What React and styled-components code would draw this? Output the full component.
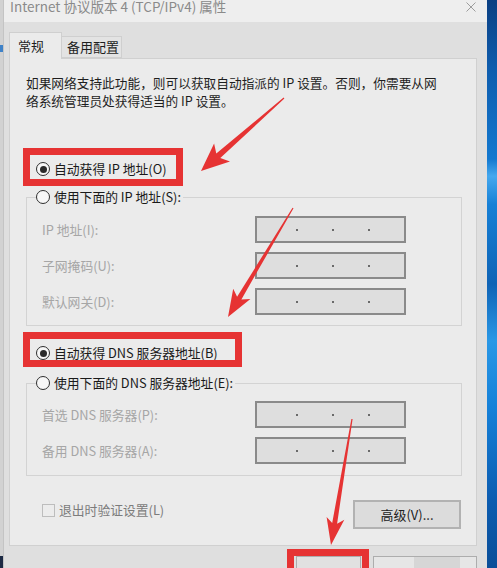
import React from "react";
import styled, { createGlobalStyle } from "styled-components";

const GlobalStyle = createGlobalStyle`
  html, body { margin: 0; padding: 0; }
  body {
    width: 497px; height: 568px; overflow: hidden;
    font-family: "Noto Sans CJK SC", "Noto Sans", sans-serif;
    background: #e0e0e0;
  }
`;

const RED = "#e63333";

const Screen = styled.div`
  position: relative;
  display: flex;
  width: 497px;
  height: 568px;
  overflow: hidden;
`;

const LeftEdge = styled.div`
  width: 4px;
  flex: none;
  display: flex;
  flex-direction: column;
  background: #d2d2d2;
  border-right: 1px solid #c4c4c4;
  box-sizing: border-box;
`;

const EdgeMark = styled.div`
  margin-top: ${(p) => p.$top}px;
  height: ${(p) => p.$h}px;
  background: ${(p) => p.$c};
`;

const Window = styled.div`
  width: 483px;
  flex: none;
  display: flex;
  flex-direction: column;
  background: #dfdfdf;
`;

const TitleBar = styled.div`
  height: 22px;
  flex: none;
  display: flex;
  justify-content: space-between;
  align-items: flex-start;
  padding: 0 11px 0 6px;
  background: #eeeeee;
`;

const TitleText = styled.div`
  font-size: 13.5px;
  line-height: 16px;
  margin-top: -2px;
  color: #8a8a8a;
  white-space: nowrap;
`;

const CloseIcon = styled.svg`
  margin-top: 2px;
  width: 10px;
  height: 10px;
`;

const Body = styled.div`
  display: flex;
  flex-direction: column;
  padding: 10px 10px 0 5px;
`;

const TabRow = styled.div`
  display: flex;
  align-items: flex-end;
  height: 26px;
  position: relative;
  z-index: 1;
`;

const Tab = styled.div`
  box-sizing: border-box;
  display: flex;
  align-items: center;
  width: ${(p) => p.$w}px;
  height: ${(p) => (p.$active ? 27 : 22)}px;
  padding-left: ${(p) => p.$pad}px;
  margin-bottom: ${(p) => (p.$active ? -1 : 0)}px;
  padding-bottom: ${(p) => (p.$active ? 1 : 0)}px;
  font-size: 13px;
  line-height: 18px;
  color: #1e1e1e;
  background: ${(p) => (p.$active ? "#ebebeb" : "#e3e3e3")};
  border: 1px solid #cfcfcf;
  border-bottom: ${(p) => (p.$active ? "none" : "1px solid #cfcfcf")};
  border-left: ${(p) => (p.$first ? "1px solid #cfcfcf" : "none")};
  white-space: nowrap;
`;

const Panel = styled.div`
  box-sizing: border-box;
  width: 468px;
  display: flex;
  flex-direction: column;
  padding: 15px 15px 16px 16px;
  background: #ebebeb;
  border: 1px solid #d0d0d0;
`;

const Intro = styled.p`
  margin: 0;
  font-size: 12.7px;
  line-height: 18px;
  color: #1e1e1e;
  white-space: nowrap;
`;

const OptionRow = styled.label`
  position: relative;
  display: flex;
  align-items: center;
  gap: 4px;
  height: 18px;
  margin-top: ${(p) => p.$mt || 0}px;
  margin-left: ${(p) => p.$ml || 0}px;
  font-size: 12.8px;
  line-height: 18px;
  color: #1a1a1a;
  white-space: nowrap;
  align-self: flex-start;
`;

const Highlight = styled.span`
  position: absolute;
  top: ${(p) => p.$t}px;
  left: ${(p) => p.$l}px;
  right: ${(p) => p.$r}px;
  bottom: ${(p) => p.$b}px;
  border: 7px solid ${RED};
  pointer-events: none;
`;

const Radio = styled.span`
  box-sizing: border-box;
  width: 14px;
  height: 14px;
  flex: none;
  border-radius: 50%;
  border: 1px solid #2e2e2e;
  background: #f7f7f7;
  display: flex;
  align-items: center;
  justify-content: center;
  &::after {
    content: "";
    width: 7px;
    height: 7px;
    border-radius: 50%;
    background: ${(p) => (p.$checked ? "#2a2a2a" : "transparent")};
  }
`;

const Group = styled.fieldset`
  margin: ${(p) => p.$mt}px -1px 0 0;
  padding: ${(p) => p.$pt}px 0 ${(p) => p.$pb}px 10px;
  border: 1px solid #d3d3d3;
  min-width: 0;
  display: flex;
  flex-direction: column;
  gap: 9px;
`;

const GroupLegend = styled.legend`
  padding: 0;
  margin: 0;
  margin-left: -1px;
  padding-right: 2px;
`;

const FieldRow = styled.div`
  display: grid;
  grid-template-columns: 213px 151px;
  align-items: center;
  height: 27px;
  padding-left: 5px;
`;

const FieldLabel = styled.span`
  font-size: 12.8px;
  line-height: 18px;
  color: #a6a6a6;
  white-space: nowrap;
`;

const IpBox = styled.div`
  box-sizing: border-box;
  width: 151px;
  height: 27px;
  display: flex;
  align-items: center;
  gap: 34px;
  padding-left: 39px;
  padding-top: 1px;
  background: #dedede;
  border: 2px solid #8a8a8a;
`;

const IpDot = styled.span`
  width: 2px;
  height: 2px;
  background: #6a6a6a;
`;

const Footer = styled.div`
  display: flex;
  justify-content: space-between;
  align-items: flex-start;
  margin-top: 24px;
`;

const CheckRow = styled.div`
  display: flex;
  align-items: center;
  gap: 4px;
  height: 18px;
  margin-top: 1px;
  margin-left: 16px;
  font-size: 12.8px;
  line-height: 18px;
  color: #7c7c7c;
  white-space: nowrap;
`;

const CheckBox = styled.span`
  box-sizing: border-box;
  width: 13px;
  height: 13px;
  border: 1px solid #bdbdbd;
  background: #ececec;
`;

const Button = styled.div`
  box-sizing: border-box;
  width: ${(p) => p.$w}px;
  height: 29px;
  display: flex;
  align-items: center;
  justify-content: center;
  font-size: 13px;
  color: #222;
  background: #dcdcdc;
  border: 2px solid #b2b2b2;
  white-space: nowrap;
`;

const BottomBar = styled.div`
  display: flex;
  margin-top: 10px;
  margin-left: 287px;
  gap: 12px;
`;

const DialogButton = styled.div`
  position: relative;
  box-sizing: border-box;
  width: ${(p) => p.$w}px;
  height: 24px;
  background: ${(p) => p.$bg};
  border: 1px solid #adadad;
  display: flex;
`;

const Mosaic = styled.span`
  width: ${(p) => p.$w}px;
  margin-left: ${(p) => p.$ml}px;
  background: #d6d6d6;
`;

const Desktop = styled.div`
  flex: 1;
  background: linear-gradient(
    180deg,
    #0b3f82 0%,
    #0e5cad 12%,
    #1378cf 28%,
    #45a8ee 31%,
    #1680d6 36%,
    #0f63b5 50%,
    #2a98e6 60%,
    #1580d8 72%,
    #0c5cb0 88%,
    #0a4e98 100%
  );
`;

const Overlay = styled.svg`
  position: absolute;
  left: 0;
  top: 0;
  width: 497px;
  height: 568px;
  pointer-events: none;
`;

function arrowPoints(x1, y1, x2, y2, headLen, headW, shaftW) {
  const dx = x2 - x1;
  const dy = y2 - y1;
  const L = Math.hypot(dx, dy);
  const ux = dx / L;
  const uy = dy / L;
  const px = -uy;
  const py = ux;
  const bx = x2 - ux * headLen;
  const by = y2 - uy * headLen;
  const jx = bx + ux * 5;
  const jy = by + uy * 5;
  const pts = [
    [x1 + px * 0.6, y1 + py * 0.6],
    [jx + (px * shaftW) / 2, jy + (py * shaftW) / 2],
    [bx + (px * headW) / 2, by + (py * headW) / 2],
    [x2, y2],
    [bx - (px * headW) / 2, by - (py * headW) / 2],
    [jx - (px * shaftW) / 2, jy - (py * shaftW) / 2],
    [x1 - px * 0.6, y1 - py * 0.6],
  ];
  return pts.map((p) => p.map((v) => v.toFixed(1)).join(",")).join(" ");
}

const arrows = [
  [284, 98, 201, 171, 28, 24, 6],
  [293, 208, 228, 317, 27, 20, 5],
  [352, 419, 331, 545, 27, 18, 5],
];

function IpField() {
  return (
    <IpBox>
      <IpDot />
      <IpDot />
      <IpDot />
    </IpBox>
  );
}

export default function App() {
  return (
    <>
      <GlobalStyle />
      <Screen>
        <LeftEdge>
          <EdgeMark $top={45} $h={7} $c="#3f82c8" />
          <EdgeMark $top={504} $h={12} $c="#1d2a44" />
        </LeftEdge>
        <Window>
          <TitleBar>
            <TitleText>Internet 协议版本 4 (TCP/IPv4) 属性</TitleText>
            <CloseIcon viewBox="0 0 10 10">
              <path d="M0.5 0.5 L9.5 9.5 M9.5 0.5 L0.5 9.5" stroke="#9c9c9c" strokeWidth="1" fill="none" />
            </CloseIcon>
          </TitleBar>
          <Body>
            <TabRow>
              <Tab $active $first $w={53} $pad={8}>常规</Tab>
              <Tab $w={60} $pad={5}>备用配置</Tab>
            </TabRow>
            <Panel>
              <Intro>
                如果网络支持此功能，则可以获取自动指派的 IP 设置。否则，你需要从网
                <br />
                络系统管理员处获得适当的 IP 设置。
              </Intro>

              <OptionRow $mt={50} $ml={10}>
                <Radio $checked />
                自动获得 IP 地址(O)
                <Highlight $t={-12} $l={-13} $r={-16} $b={-8} />
              </OptionRow>

              <Group $mt={10} $pt={10} $pb={10}>
                <GroupLegend>
                  <OptionRow>
                    <Radio />
                    使用下面的 IP 地址(S):
                  </OptionRow>
                </GroupLegend>
                <FieldRow>
                  <FieldLabel>IP 地址(I):</FieldLabel>
                  <IpField />
                </FieldRow>
                <FieldRow>
                  <FieldLabel>子网掩码(U):</FieldLabel>
                  <IpField />
                </FieldRow>
                <FieldRow>
                  <FieldLabel>默认网关(D):</FieldLabel>
                  <IpField />
                </FieldRow>
              </Group>

              <OptionRow $mt={18} $ml={10}>
                <Radio $checked />
                自动获得 DNS 服务器地址(B)
                <Highlight $t={-12} $l={-13} $r={-24} $b={-5} />
              </OptionRow>

              <Group $mt={12} $pt={9} $pb={11}>
                <GroupLegend>
                  <OptionRow>
                    <Radio />
                    使用下面的 DNS 服务器地址(E):
                  </OptionRow>
                </GroupLegend>
                <FieldRow>
                  <FieldLabel>首选 DNS 服务器(P):</FieldLabel>
                  <IpField />
                </FieldRow>
                <FieldRow>
                  <FieldLabel>备用 DNS 服务器(A):</FieldLabel>
                  <IpField />
                </FieldRow>
              </Group>

              <Footer>
                <CheckRow>
                  <CheckBox />
                  退出时验证设置(L)
                </CheckRow>
                <Button $w={108}>高级(V)...</Button>
              </Footer>
            </Panel>
            <BottomBar>
              <DialogButton $w={66} $bg="#e1e1e1">
                <Highlight $t={-8} $l={-10} $r={-9} $b={-20} />
              </DialogButton>
              <DialogButton $w={105} $bg="#e6e6e6">
                <Mosaic $w={46} $ml={40} />
              </DialogButton>
            </BottomBar>
          </Body>
        </Window>
        <Desktop />
        <Overlay viewBox="0 0 497 568">
          {arrows.map((a, i) => (
            <polygon key={i} points={arrowPoints(...a)} fill={RED} />
          ))}
        </Overlay>
      </Screen>
    </>
  );
}
